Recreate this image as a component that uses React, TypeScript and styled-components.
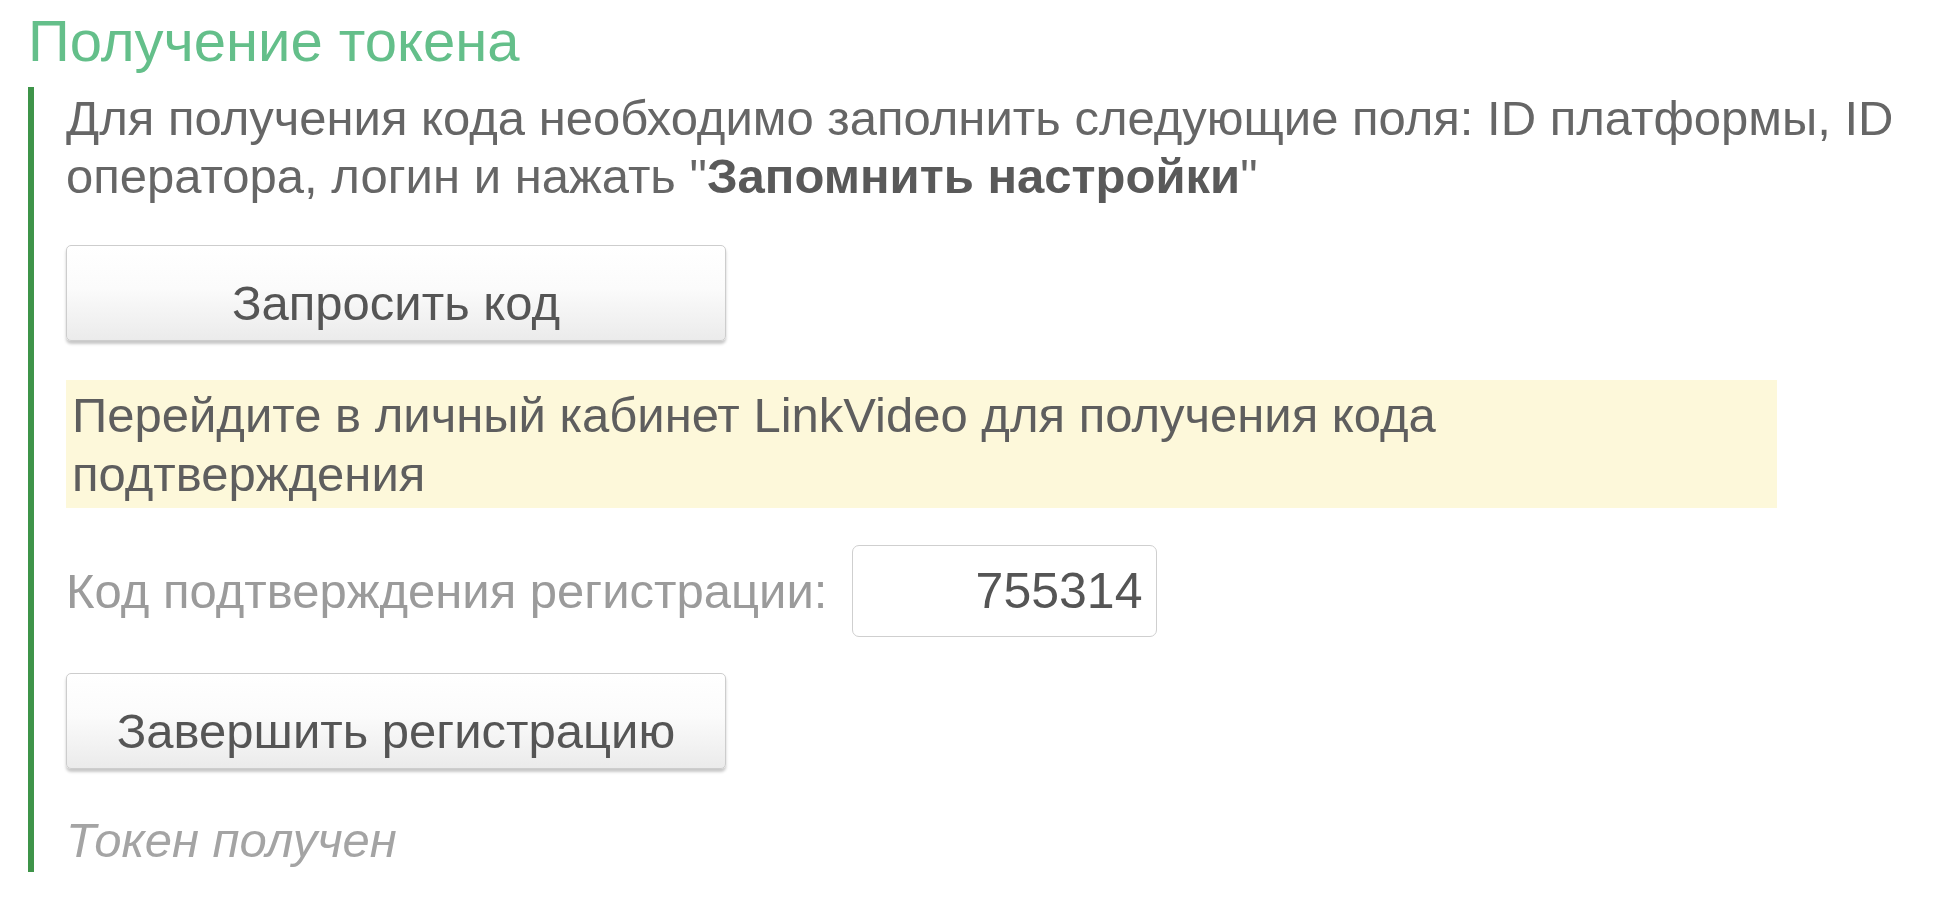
import styled, { createGlobalStyle } from 'styled-components';

const GlobalStyle = createGlobalStyle`
  html, body {
    margin: 0;
    padding: 0;
    background: #ffffff;
  }
  body {
    font-family: 'Liberation Sans', Arial, sans-serif;
  }
`;

const Page = styled.div`
  padding: 7px 14px 0 28px;
  width: 1954px;
  box-sizing: border-box;
`;

const Title = styled.h2`
  margin: 0;
  font-size: 58px;
  line-height: 68px;
  font-weight: normal;
  color: #64bf8a;
`;

const Group = styled.section`
  margin-top: 12px;
  padding: 2px 0 3px 32px;
  border-left: 6px solid #3e9449;
  display: flex;
  flex-direction: column;
  align-items: flex-start;
`;

const Text = styled.p`
  margin: 0;
  font-size: 49px;
  line-height: 58px;
  color: #666666;

  b {
    color: #595959;
  }
`;

const Button = styled.button<{ $gap: number }>`
  margin-top: ${(p) => p.$gap}px;
  width: 660px;
  height: 96px;
  box-sizing: border-box;
  padding: 20px 0 0;
  border: 1px solid #cdcdcd;
  border-radius: 5px;
  background: linear-gradient(#ffffff 0%, #fbfbfb 45%, #ebebeb 100%);
  box-shadow: 0 3px 3px rgba(0, 0, 0, 0.22);
  font-family: inherit;
  font-size: 49px;
  line-height: 58px;
  color: #555555;
  text-align: center;
  vertical-align: top;
  cursor: pointer;
`;

const Hint = styled.div`
  margin-top: 39px;
  width: 1711px;
  box-sizing: border-box;
  padding: 6px 6px 4px;
  background: #fdf8da;
  font-size: 49px;
  line-height: 59px;
  color: #5e5e5e;
`;

const FieldRow = styled.div`
  margin-top: 37px;
  display: flex;
  align-items: center;
  gap: 25px;
`;

const Label = styled.label`
  font-size: 49px;
  line-height: 58px;
  color: #9b9b9b;
  white-space: nowrap;
`;

const Input = styled.input`
  width: 305px;
  height: 92px;
  box-sizing: border-box;
  padding: 0 14px 0 10px;
  border: 1.5px solid #cfcfcf;
  border-radius: 7px;
  background: #ffffff;
  font-family: inherit;
  font-size: 50px;
  color: #555555;
  text-align: right;
  outline: none;
`;

const Status = styled.div`
  margin-top: 42px;
  font-size: 49px;
  line-height: 58px;
  font-style: italic;
  color: #a4a4a4;
`;

const App = () => {
  return (
    <Page>
      <GlobalStyle />
      <Title>Получение токена</Title>
      <Group>
        <Text>
          Для получения кода необходимо заполнить следующие поля: ID платформы, ID оператора, логин и нажать
          "<b>Запомнить настройки</b>"
        </Text>
        <Button $gap={40}>Запросить код</Button>
        <Hint>Перейдите в личный кабинет LinkVideo для получения кода подтверждения</Hint>
        <FieldRow>
          <Label htmlFor='code'>Код подтверждения регистрации:</Label>
          <Input id='code' defaultValue='755314' />
        </FieldRow>
        <Button $gap={36}>Завершить регистрацию</Button>
        <Status>Токен получен</Status>
      </Group>
    </Page>
  );
};

export default App;
